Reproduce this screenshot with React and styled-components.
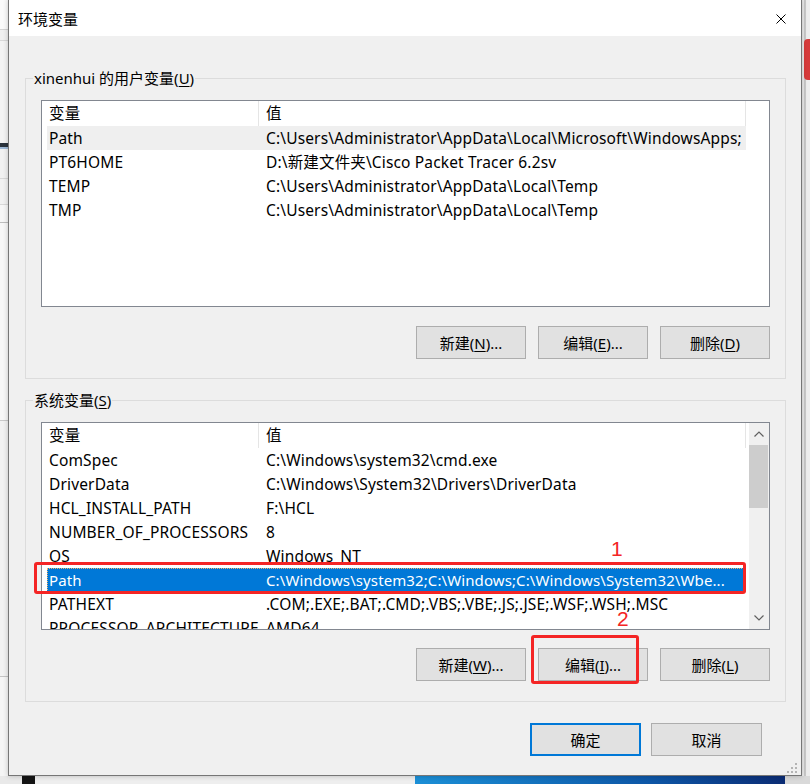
import React from 'react';
import styled, { createGlobalStyle } from 'styled-components';

const FONT = `"Noto Sans", "Noto Sans CJK SC", sans-serif`;

const Global = createGlobalStyle`
  html, body { margin: 0; padding: 0; }
  body { width: 810px; height: 784px; overflow: hidden; background: #f0f0f0; }
  * { box-sizing: border-box; }
`;

const Page = styled.div`
  position: relative;
  width: 810px;
  height: 784px;
  overflow: hidden;
  background: #ececec;
  font-family: ${FONT};
  color: #000;
`;

/* ---------- desktop behind the dialog ---------- */
const LeftBackdrop = styled.div`
  position: absolute;
  left: 0;
  top: 0;
  width: 8px;
  height: 776px;
  background: linear-gradient(
    to bottom,
    #fafafa 0 29px,
    #d4d4d4 29px 30px,
    #f0f0f0 30px 40px,
    #d8d8d8 40px 41px,
    #f3f3f3 41px 143px,
    #2a323c 143px 147px,
    #9db8d6 147px 149px,
    #f1f1f1 149px 178px,
    #d8d8d8 178px 179px,
    #f1f1f1 179px 204px,
    #d8d8d8 204px 205px,
    #f6f6f6 205px 222px,
    #bdbdbd 222px 223px,
    #f7f7f7 223px 420px,
    #c9c9c9 420px 421px,
    #f2f2f2 421px 676px,
    #c4c4c4 676px 677px,
    #f5f5f5 677px 776px
  );
`;

const RightBackdrop = styled.div`
  position: absolute;
  left: 802px;
  top: 0;
  width: 8px;
  height: 776px;
  background: linear-gradient(
    to right,
    #ebebeb 0 2px,
    #c9c9c9 2px 4px,
    #ededed 4px 8px
  );
`;

const RedTab = styled.div`
  position: absolute;
  left: 804px;
  top: 39px;
  width: 8px;
  height: 41px;
  border-radius: 4px 0 0 4px;
  background: #d63b3b;
`;

const Wallpaper = styled.div`
  position: absolute;
  left: 0;
  top: 776px;
  width: 810px;
  height: 8px;
  background: linear-gradient(
    to right,
    #e9e9e9 0 22px,
    #141414 22px 35px,
    #eeeeee 35px 415px,
    #1b8fd6 415px,
    #0d56a6 650px,
    #0b2c74 785px,
    #d9d9d9 785px
  );
`;

/* ---------- dialog ---------- */
const Dialog = styled.div`
  position: absolute;
  left: 8px;
  top: -1px;
  width: 794px;
  height: 777px;
  border: 1px solid #767676;
  background: #f0f0f0;
  display: flex;
  flex-direction: column;
  box-shadow: 0 0 5px rgba(0, 0, 0, 0.22);
`;

const TitleBar = styled.div`
  flex: none;
  height: 36px;
  background: #fff;
  display: flex;
  align-items: center;
  justify-content: space-between;
  padding: 1px 15px 0 9px;
  font-size: 15px;
`;

const CloseButton = styled.div`
  width: 10px;
  height: 10px;
  display: flex;
`;

const Body = styled.div`
  flex: 1;
  padding: 32px 15px 0 16px;
  display: flex;
  flex-direction: column;
`;

const Group = styled.fieldset`
  margin: ${(p) => (p.$spaced ? '11px' : '0')} 0 0;
  border: 1px solid #dcdcdc;
  padding: 12px 15px ${(p) => p.$bottom}px;
  min-width: 0;
`;

const Legend = styled.legend`
  font-size: 15px;
  line-height: 20px;
  padding: 0 1px;
  margin-left: -8px;
`;

const Key = styled.span`
  text-decoration: underline;
  text-underline-offset: 2px;
`;

const ListBox = styled.div`
  height: ${(p) => p.$h}px;
  border: 1px solid #828790;
  background: #fff;
  display: flex;
  overflow: hidden;
  font-size: 15.5px;
  letter-spacing: 0.15px;
`;

const ListContent = styled.div`
  flex: 1;
  min-width: 0;
  overflow: hidden;
`;

const Header = styled.div`
  display: flex;
  height: 25px;
  line-height: 25px;
`;

const HeaderCell = styled.div`
  width: ${(p) => p.$w}px;
  padding-left: 7px;
  border-right: 1px solid #e5e5e5;
  white-space: nowrap;
`;

const Rows = styled.div`
  padding-left: 5px;
`;

const Row = styled.div`
  display: flex;
  width: 699px;
  height: 24px;
  line-height: 24px;
  background: ${(p) => (p.$selected ? '#0078d7' : p.$hot ? '#efefef' : 'transparent')};
  color: ${(p) => (p.$selected ? '#fff' : '#000')};
  outline: ${(p) => (p.$selected ? '1px dotted #f3b36b' : 'none')};
  outline-offset: -1px;
  font-size: ${(p) => (p.$selected ? '15px' : 'inherit')};
  letter-spacing: ${(p) => (p.$selected ? '0.1px' : 'inherit')};
`;

const NameCell = styled.div`
  flex: none;
  width: 212px;
  padding-left: 2px;
  white-space: nowrap;
  overflow: hidden;
`;

const ValueCell = styled.div`
  flex: 1;
  min-width: 0;
  padding-left: 7px;
  white-space: nowrap;
  overflow: hidden;
`;

const ScrollBar = styled.div`
  flex: none;
  width: 20px;
  background: #f0f0f0;
  display: flex;
  flex-direction: column;
`;

const ScrollArrow = styled.div`
  flex: none;
  height: 22px;
  display: flex;
  align-items: center;
  justify-content: center;
`;

const ScrollTrack = styled.div`
  flex: 1;
  padding: 0 1px 0 0;
`;

const ScrollThumb = styled.div`
  height: 63px;
  background: #cdcdcd;
`;

const ButtonRow = styled.div`
  display: flex;
  justify-content: flex-end;
  gap: 12px;
  margin-top: ${(p) => p.$top}px;
`;

const Button = styled.button`
  width: ${(p) => p.$w || 110}px;
  height: 33px;
  padding: 0;
  border: ${(p) => (p.$default ? '2px solid #0078d7' : '1px solid #adadad')};
  background: #e1e1e1;
  font-family: ${FONT};
  font-size: 15px;
  color: #000;
  display: flex;
  align-items: center;
  justify-content: center;
`;

const Footer = styled.div`
  display: flex;
  justify-content: flex-end;
  gap: 10px;
  margin-top: 21px;
  padding-right: 24px;
`;

const Grip = styled.div`
  position: absolute;
  right: 4px;
  bottom: 2px;
  width: 10px;
  height: 10px;
  display: flex;
`;

/* ---------- annotations ---------- */
const Highlight = styled.div`
  position: absolute;
  left: ${(p) => p.$x}px;
  top: ${(p) => p.$y}px;
  width: ${(p) => p.$w}px;
  height: ${(p) => p.$h}px;
  border: 3px solid #f42525;
  border-radius: 3px;
  pointer-events: none;
`;

const StepNumber = styled.div`
  position: absolute;
  left: ${(p) => p.$x}px;
  top: ${(p) => p.$y}px;
  font-family: "Liberation Sans", sans-serif;
  font-size: 21px;
  line-height: 21px;
  color: #f42525;
`;

const userVars = [
  ['Path', 'C:\\Users\\Administrator\\AppData\\Local\\Microsoft\\WindowsApps;'],
  ['PT6HOME', 'D:\\新建文件夹\\Cisco Packet Tracer 6.2sv'],
  ['TEMP', 'C:\\Users\\Administrator\\AppData\\Local\\Temp'],
  ['TMP', 'C:\\Users\\Administrator\\AppData\\Local\\Temp'],
];

const sysVars = [
  ['ComSpec', 'C:\\Windows\\system32\\cmd.exe'],
  ['DriverData', 'C:\\Windows\\System32\\Drivers\\DriverData'],
  ['HCL_INSTALL_PATH', 'F:\\HCL'],
  ['NUMBER_OF_PROCESSORS', '8'],
  ['OS', 'Windows_NT'],
  ['Path', 'C:\\Windows\\system32;C:\\Windows;C:\\Windows\\System32\\Wbe...'],
  ['PATHEXT', '.COM;.EXE;.BAT;.CMD;.VBS;.VBE;.JS;.JSE;.WSF;.WSH;.MSC'],
  ['PROCESSOR_ARCHITECTURE', 'AMD64'],
];

const Chevron = ({ up }) => (
  <svg width="10" height="6" viewBox="0 0 10 6">
    <polyline
      points={up ? '0.5,5.5 5,1 9.5,5.5' : '0.5,0.5 5,5 9.5,0.5'}
      fill="none"
      stroke="#606060"
      strokeWidth="1.2"
    />
  </svg>
);

const VarList = ({ height, rows, hot, selected, scroll }) => (
  <ListBox $h={height}>
    <ListContent>
      <Header>
        <HeaderCell $w={217}>变量</HeaderCell>
        <HeaderCell $w={487}>值</HeaderCell>
      </Header>
      <Rows>
        {rows.map(([n, v], i) => (
          <Row key={i} $hot={i === hot} $selected={i === selected}>
            <NameCell>{n}</NameCell>
            <ValueCell>{v}</ValueCell>
          </Row>
        ))}
      </Rows>
    </ListContent>
    {scroll && (
      <ScrollBar>
        <ScrollArrow>
          <Chevron up />
        </ScrollArrow>
        <ScrollTrack>
          <ScrollThumb />
        </ScrollTrack>
        <ScrollArrow>
          <Chevron />
        </ScrollArrow>
      </ScrollBar>
    )}
  </ListBox>
);

export default function App() {
  return (
    <Page>
      <Global />
      <LeftBackdrop />
      <RightBackdrop />
      <RedTab />
      <Wallpaper />
      <Dialog>
        <TitleBar>
          <span>环境变量</span>
          <CloseButton>
            <svg width="10" height="10" viewBox="0 0 10 10">
              <path d="M0.5 0.5 L9.5 9.5 M9.5 0.5 L0.5 9.5" stroke="#000" strokeWidth="1" />
            </svg>
          </CloseButton>
        </TitleBar>
        <Body>
          <Group $bottom={19}>
            <Legend>
              xinenhui 的用户变量(<Key>U</Key>)
            </Legend>
            <VarList height={207} rows={userVars} hot={0} />
            <ButtonRow $top={19}>
              <Button>新建(<Key>N</Key>)...</Button>
              <Button>编辑(<Key>E</Key>)...</Button>
              <Button>删除(<Key>D</Key>)</Button>
            </ButtonRow>
          </Group>
          <Group $spaced $bottom={20}>
            <Legend>
              系统变量(<Key>S</Key>)
            </Legend>
            <VarList height={208} rows={sysVars} selected={5} scroll />
            <ButtonRow $top={18}>
              <Button>新建(<Key>W</Key>)...</Button>
              <Button>编辑(<Key>I</Key>)...</Button>
              <Button>删除(<Key>L</Key>)</Button>
            </ButtonRow>
          </Group>
          <Footer>
            <Button $w={111} $default>确定</Button>
            <Button $w={111}>取消</Button>
          </Footer>
        </Body>
        <Grip>
          <svg width="10" height="10" viewBox="0 0 10 10" fill="#b4b4b4">
            <rect x="8" y="0" width="2" height="2" />
            <rect x="4" y="4" width="2" height="2" />
            <rect x="8" y="4" width="2" height="2" />
            <rect x="0" y="8" width="2" height="2" />
            <rect x="4" y="8" width="2" height="2" />
            <rect x="8" y="8" width="2" height="2" />
          </svg>
        </Grip>
      </Dialog>
      <Highlight $x={34} $y={562} $w={712} $h={32} />
      <Highlight $x={531} $y={635} $w={108} $h={49} />
      <StepNumber $x={611} $y={538}>1</StepNumber>
      <StepNumber $x={617} $y={608}>2</StepNumber>
    </Page>
  );
}
